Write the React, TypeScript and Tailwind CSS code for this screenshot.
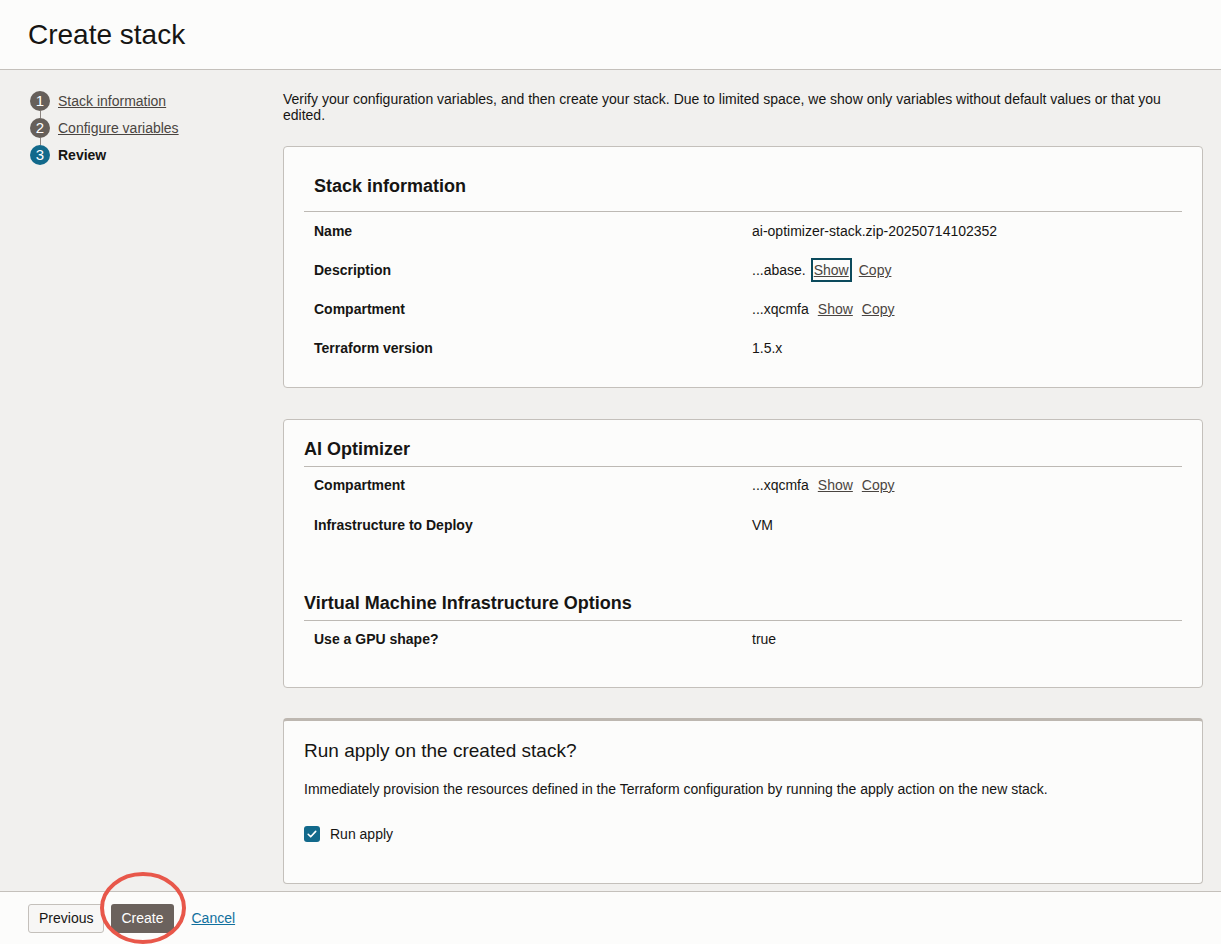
import React from "react";

const steps = [
  { n: 1, label: "Stack information", done: true },
  { n: 2, label: "Configure variables", done: true },
  { n: 3, label: "Review", done: false },
];

function Row({ label, children, tall = false }: { label: string; children: React.ReactNode; tall?: boolean }) {
  return (
    <div className={`flex items-start ${tall ? "h-[40px] pt-[10px]" : "h-[39px] pt-[11px]"} text-[14px] leading-[16px]`}>
      <div className="w-[448px] shrink-0 pl-[10px] font-bold text-[#161513]">{label}</div>
      <div className="flex items-center text-[#161513]">{children}</div>
    </div>
  );
}

function LinkBtn({ children, focused = false }: { children: React.ReactNode; focused?: boolean }) {
  return (
    <span
      className={`underline text-[#4a4541] ${
        focused ? "outline-2 outline-[#0b4a5c] px-[1px] py-[2px]" : ""
      }`}
    >
      {children}
    </span>
  );
}

export default function App() {
  return (
    <div
      className="relative h-[944px] w-[1221px] flex flex-col overflow-hidden text-[#161513]"
      style={{ fontFamily: '"Liberation Sans", Arial, sans-serif' }}
    >
      {/* header */}
      <div className="h-[70px] shrink-0 bg-[#fcfcfb] border-b border-[#c4c0bb] flex items-center px-[28px]">
        <h1 className="text-[28px] leading-[32px] text-[#161513] mt-[1px]">Create stack</h1>
      </div>

      {/* body */}
      <div className="flex-1 flex bg-[#f1f0ee] overflow-hidden">
        {/* steps */}
        <div className="w-[283px] shrink-0 pl-[30px] pt-[21px]">
          {steps.map((s, i) => (
            <div key={s.n} className="flex flex-col">
              {i > 0 && <div className="ml-[10px] w-px h-[7px] bg-[#8b847f]" />}
              <div className="flex items-center h-[20px]">
                <div
                  className={`w-[20px] h-[20px] rounded-full flex items-center justify-center text-[15px] text-white ${
                    s.done ? "bg-[#665f5a]" : "bg-[#12698b]"
                  }`}
                >
                  {s.n}
                </div>
                <span
                  className={`ml-[8px] text-[14px] ${
                    s.done ? "underline text-[#4a4541]" : "font-bold text-[#161513]"
                  }`}
                >
                  {s.label}
                </span>
              </div>
            </div>
          ))}
        </div>

        {/* main */}
        <div className="flex-1 pr-[18px] pt-[21px]">
          <p className="text-[14px] leading-[16px] text-[#161513]">
            Verify your configuration variables, and then create your stack. Due to limited space, we show only
            variables without default values or that you edited.
          </p>

          {/* stack information */}
          <div className="mt-[23px] bg-[#fcfcfb] border border-[#c4c0bb] rounded-[4px] px-[20px] pt-[28px] pb-[19px]">
            <h2 className="pl-[10px] text-[18px] leading-[22px] font-bold">Stack information</h2>
            <div className="mt-[14px] border-t border-[#bdb9b4]" />
            <Row label="Name">ai-optimizer-stack.zip-20250714102352</Row>
            <Row label="Description">
              <span>...abase.</span>
              <span className="ml-[7px]">
                <LinkBtn focused>Show</LinkBtn>
              </span>
              <span className="ml-[9px]">
                <LinkBtn>Copy</LinkBtn>
              </span>
            </Row>
            <Row label="Compartment">
              <span>...xqcmfa</span>
              <span className="ml-[9px]">
                <LinkBtn>Show</LinkBtn>
              </span>
              <span className="ml-[9px]">
                <LinkBtn>Copy</LinkBtn>
              </span>
            </Row>
            <Row label="Terraform version">1.5.x</Row>
          </div>

          {/* AI optimizer */}
          <div className="mt-[31px] bg-[#fcfcfb] border border-[#c4c0bb] rounded-[4px] px-[20px] pt-[18px] pb-[26px]">
            <h2 className="text-[18px] leading-[22px] font-bold">AI Optimizer</h2>
            <div className="mt-[6px] border-t border-[#bdb9b4]" />
            <Row label="Compartment" tall>
              <span>...xqcmfa</span>
              <span className="ml-[9px]">
                <LinkBtn>Show</LinkBtn>
              </span>
              <span className="ml-[9px]">
                <LinkBtn>Copy</LinkBtn>
              </span>
            </Row>
            <Row label="Infrastructure to Deploy" tall>
              VM
            </Row>

            <h2 className="mt-[45px] text-[18px] leading-[22px] font-bold">Virtual Machine Infrastructure Options</h2>
            <div className="mt-[6px] border-t border-[#bdb9b4]" />
            <Row label="Use a GPU shape?" tall>
              true
            </Row>
          </div>

          {/* run apply */}
          <div className="mt-[30px] bg-[#fcfcfb] border border-[#c4c0bb] border-t-[3px] border-t-[#bdb7b0] rounded-[4px] px-[20px] pt-[19px] pb-[41px]">
            <h2 className="text-[19px] leading-[22px]">Run apply on the created stack?</h2>
            <p className="mt-[19px] text-[14px] leading-[16px]">
              Immediately provision the resources defined in the Terraform configuration by running the apply action on
              the new stack.
            </p>
            <div className="mt-[29px] flex items-center h-[16px]">
              <div className="w-[16px] h-[16px] rounded-[3px] bg-[#12698b] flex items-center justify-center">
                <svg width="12" height="12" viewBox="0 0 12 12" fill="none">
                  <path d="M2.2 6.3l2.5 2.5 5-5.4" stroke="white" strokeWidth="1.6" strokeLinecap="round" strokeLinejoin="round" />
                </svg>
              </div>
              <span className="ml-[10px] text-[14px]">Run apply</span>
            </div>
          </div>
        </div>
      </div>

      {/* footer */}
      <div className="h-[53px] shrink-0 bg-[#fcfcfb] border-t border-[#c4c0bb] flex items-center px-[28px]">
        <button className="h-[29px] px-[10px] rounded-[3px] border border-[#c4c0bb] bg-[#f7f6f5] text-[14px] text-[#161513]">
          Previous
        </button>
        <button className="ml-[7px] h-[29px] px-[10px] rounded-[3px] bg-[#6b625d] text-[14px] text-white">
          Create
        </button>
        <a className="ml-[18px] text-[14px] underline text-[#11709e]">Cancel</a>
      </div>

      {/* annotation ring */}
      <svg className="absolute left-[98px] top-[870px] pointer-events-none" width="90" height="76" viewBox="0 0 90 76">
        <ellipse cx="45" cy="38" rx="41" ry="34" fill="none" stroke="#e8574a" strokeWidth="4" />
      </svg>
    </div>
  );
}
